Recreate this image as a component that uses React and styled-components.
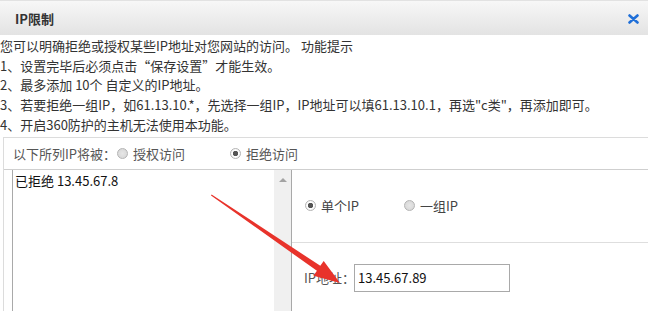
import React from "react"
import styled, { createGlobalStyle } from "styled-components"

const GlobalStyle = createGlobalStyle`
  html, body {
    margin: 0;
    padding: 0;
    background: #fff;
  }
  body {
    width: 648px;
    height: 311px;
    overflow: hidden;
    font-family: "Noto Sans CJK SC", "Noto Sans", sans-serif;
    font-size: 13px;
    color: #333;
  }
`

const notes = [
  "您可以明确拒绝或授权某些IP地址对您网站的访问。 功能提示",
  "1、设置完毕后必须点击“保存设置”才能生效。",
  "2、最多添加 10个 自定义的IP地址。",
  "3、若要拒绝一组IP，如61.13.10.*，先选择一组IP，IP地址可以填61.13.10.1，再选\"c类\"，再添加即可。",
  "4、开启360防护的主机无法使用本功能。",
]

function App() {
  return (
    <Dialog>
      <GlobalStyle />
      <Header>
        <Title>IP限制</Title>
        <Close aria-label="close">
          <svg width="11" height="10" viewBox="0 0 11 10">
            <path d="M1.5 1.5 L9.5 8.5 M9.5 1.5 L1.5 8.5" stroke="#1f6fd8" strokeWidth="2.6" strokeLinecap="round" />
          </svg>
        </Close>
      </Header>

      <Notes>
        {notes.map((n) => (
          <NoteLine key={n}>{n}</NoteLine>
        ))}
      </Notes>

      <Panel>
        <ModeRow>
          <span>以下所列IP将被：</span>
          <Choice $gap={44}>
            <Radio />
            授权访问
          </Choice>
          <Choice>
            <Radio $checked />
            拒绝访问
          </Choice>
        </ModeRow>

        <PanelBody>
          <ListBox>
            <ListText>已拒绝 13.45.67.8</ListText>
            <Scrollbar>
              <ScrollArrow />
            </Scrollbar>
          </ListBox>

          <Side>
            <TypeRow>
              <Choice $gap={44} $dark>
                <Radio $checked />
                单个IP
              </Choice>
              <Choice $dark>
                <Radio />
                一组IP
              </Choice>
            </TypeRow>
            <AddrRow>
              <AddrLabel>IP地址：</AddrLabel>
              <AddrInput defaultValue="13.45.67.89" />
            </AddrRow>
          </Side>
        </PanelBody>
      </Panel>

      <Arrow width="648" height="311" viewBox="0 0 648 311">
        <polygon
          points="211,195.5 316.9,270.8 313.5,275.7 340,283 323.7,260.9 320.3,265.8 211.6,194.4"
          fill="#e8332b"
        />
      </Arrow>
    </Dialog>
  )
}

const Dialog = styled.div`
  position: relative;
  width: 648px;
  height: 311px;
  overflow: hidden;
`

const Header = styled.div`
  height: 34px;
  border-top: 1px solid #e2e2e2;
  background: linear-gradient(#f7f7f7, #e3e3e3);
  display: flex;
  align-items: center;
  justify-content: space-between;
  padding: 0 9px 0 15px;
`

const Title = styled.div`
  font-weight: bold;
  color: #333;
`

const Close = styled.div`
  display: flex;
  align-items: center;
  margin-top: 1px;
`

const Notes = styled.div`
  padding-top: 1px;
`

const NoteLine = styled.div`
  line-height: 19.7px;
  white-space: nowrap;
  color: #333;
`

const Panel = styled.div`
  margin: 2px 0 0 3px;
  border: 1px solid #dcdcdc;
  border-right: none;
  height: 200px;
`

const ModeRow = styled.div`
  height: 31px;
  padding-left: 9px;
  display: flex;
  align-items: center;
  color: #555;
  border-bottom: 1px solid #cfcfcf;
`

const Choice = styled.label`
  display: flex;
  align-items: center;
  gap: 5px;
  margin-right: ${(p) => p.$gap || 0}px;
  color: ${(p) => (p.$dark ? "#444" : "#555")};
`

const Radio = styled.span`
  width: 11px;
  height: 11px;
  border-radius: 50%;
  box-sizing: border-box;
  border: 1px solid #b4b4b4;
  background: ${(p) =>
    p.$checked
      ? "radial-gradient(circle, #555 0, #555 2.4px, #fff 3px, #eaeaea 100%)"
      : "radial-gradient(circle, #e6e6e6 0, #d4d4d4 100%)"};
  margin-left: 1px;
`

const PanelBody = styled.div`
  display: flex;
  height: 160px;
`

const ListBox = styled.div`
  margin-left: 8px;
  width: 278px;
  border-left: 1px solid #a9a9a9;
  border-right: 1px solid #a9a9a9;
  display: flex;
  justify-content: space-between;
`

const ListText = styled.div`
  padding: 1px 0 0 2px;
  color: #111;
  line-height: 19px;
`

const Scrollbar = styled.div`
  width: 17px;
  background: #f0f0f0;
  display: flex;
  justify-content: center;
  padding-top: 8px;
  box-sizing: border-box;
`

const ScrollArrow = styled.div`
  width: 0;
  height: 0;
  border-left: 4px solid transparent;
  border-right: 4px solid transparent;
  border-bottom: 4px solid #a3a3a3;
`

const Side = styled.div`
  flex: 1;
`

const TypeRow = styled.div`
  height: 72px;
  padding-left: 12px;
  display: flex;
  align-items: center;
  border-bottom: 1px solid #dedede;
`

const AddrRow = styled.div`
  padding: 21px 0 0 12px;
  display: flex;
  align-items: center;
`

const AddrLabel = styled.span`
  color: #555;
  width: 50px;
  white-space: nowrap;
`

const AddrInput = styled.input`
  width: 156px;
  height: 28px;
  box-sizing: border-box;
  border: 1px solid #a9a9a9;
  padding: 0 3px;
  font-family: "Noto Sans CJK SC", "Noto Sans", sans-serif;
  font-size: 13px;
  color: #111;
  outline: none;
`

const Arrow = styled.svg`
  position: absolute;
  left: 0;
  top: 0;
  pointer-events: none;
`

export default App
